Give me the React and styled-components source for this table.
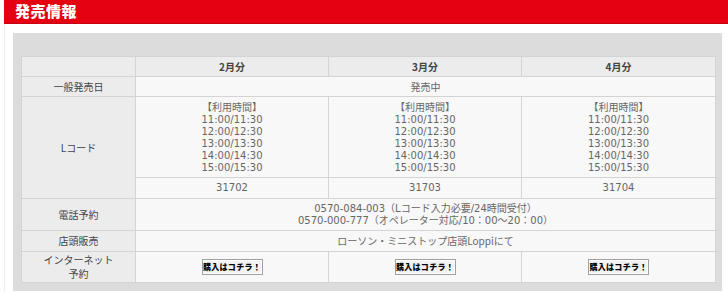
import React from 'react'
import styled, { createGlobalStyle } from 'styled-components'

const GlobalStyle = createGlobalStyle`
    body {
        margin: 0;
        background: #fff;
        font-family: "DejaVu Sans", "Noto Sans CJK JP", sans-serif;
    }
`

const Page = styled.div`
    width: 728px;
    height: 298px;
    padding-left: 4px;
    box-sizing: border-box;
`

const TitleBar = styled.h2`
    margin: 0;
    height: 24px;
    background: #e50012;
    border-bottom: 1px solid #c8000f;
    box-sizing: border-box;
    padding-left: 11px;
    color: #fff;
    font-family: "Noto Sans CJK JP", sans-serif;
    font-size: 15px;
    font-weight: 900;
    line-height: 22px;
    letter-spacing: 0.5px;
`

const Box = styled.div`
    border-left: 1px solid #eee;
    padding: 9px 6px 0 8px;
`

const Panel = styled.div`
    background: #dcdcdc;
    padding: 23px 7px 8px 8px;
`

const Table = styled.table`
    width: 694px;
    border-collapse: collapse;
    table-layout: fixed;
    font-size: 10px;
    color: #555;
`

const Cell = styled.td`
    border: 1px solid #d4d4d4;
    text-align: center;
    vertical-align: middle;
    padding: 0;
    height: ${(p) => p.$h}px;
    background: ${(p) => (p.$label ? '#ececec' : '#f8f8f8')};
    font-weight: ${(p) => (p.$bold ? 'bold' : 'normal')};
    color: ${(p) => (p.$label ? '#444' : '#666')};
    line-height: 12px;
    font-family: ${(p) => (p.$jp ? '"Noto Sans CJK JP", sans-serif' : 'inherit')};
`

const LabelLine = styled.div`
    line-height: 14.5px;
`

const Bracket = styled.div`
    font-family: "Noto Sans CJK JP", sans-serif;
    line-height: 14px;
`

const BuyButton = styled.span`
    display: inline-block;
    width: 59px;
    height: 14px;
    border: 1px solid #a0a0a0;
    background: #f2f2f2;
    box-shadow: inset 0 0 0 1px #fff;
    color: #000;
    font-family: "Noto Sans CJK JP", sans-serif;
    font-size: 8px;
    font-weight: 900;
    line-height: 14px;
    letter-spacing: 0.3px;
    vertical-align: middle;
`

const months = [
    { name: '2月分', code: '31702' },
    { name: '3月分', code: '31703' },
    { name: '4月分', code: '31704' },
]

const times = ['11:00/11:30', '12:00/12:30', '13:00/13:30', '14:00/14:30', '15:00/15:30']

export default function App() {
    return (
        <Page>
            <GlobalStyle />
            <TitleBar>発売情報</TitleBar>
            <Box>
                <Panel>
                    <Table>
                        <colgroup>
                            <col style={{ width: 114 }} />
                            <col style={{ width: 193 }} />
                            <col style={{ width: 193 }} />
                            <col style={{ width: 194 }} />
                        </colgroup>
                        <tbody>
                            <tr>
                                <Cell $label $h={19} />
                                {months.map((m) => (
                                    <Cell key={m.name} $label $bold $jp $h={19}>{m.name}</Cell>
                                ))}
                            </tr>
                            <tr>
                                <Cell $label $jp $h={19}>一般発売日</Cell>
                                <Cell colSpan={3} $jp $h={19}>発売中</Cell>
                            </tr>
                            <tr>
                                <Cell $label $jp rowSpan={2}>Lコード</Cell>
                                {months.map((m) => (
                                    <Cell key={m.name} $h={80}>
                                        <Bracket>【利用時間】</Bracket>
                                        {times.map((t) => (
                                            <div key={t}>{t}</div>
                                        ))}
                                    </Cell>
                                ))}
                            </tr>
                            <tr>
                                {months.map((m) => (
                                    <Cell key={m.name} $h={20}>{m.code}</Cell>
                                ))}
                            </tr>
                            <tr>
                                <Cell $label $jp $h={31}>電話予約</Cell>
                                <Cell colSpan={3} $h={31}>
                                    <div>0570-084-003（Lコード入力必要/24時間受付）</div>
                                    <div>0570-000-777（オペレーター対応/10：00～20：00）</div>
                                </Cell>
                            </tr>
                            <tr>
                                <Cell $label $jp $h={20}>店頭販売</Cell>
                                <Cell colSpan={3} $jp $h={20}>ローソン・ミニストップ店頭Loppiにて</Cell>
                            </tr>
                            <tr>
                                <Cell $label $jp $h={30}>
                                    <LabelLine>インターネット</LabelLine>
                                    <LabelLine>予約</LabelLine>
                                </Cell>
                                {months.map((m) => (
                                    <Cell key={m.name} $h={30}>
                                        <BuyButton>購入はコチラ！</BuyButton>
                                    </Cell>
                                ))}
                            </tr>
                        </tbody>
                    </Table>
                </Panel>
            </Box>
        </Page>
    )
}
